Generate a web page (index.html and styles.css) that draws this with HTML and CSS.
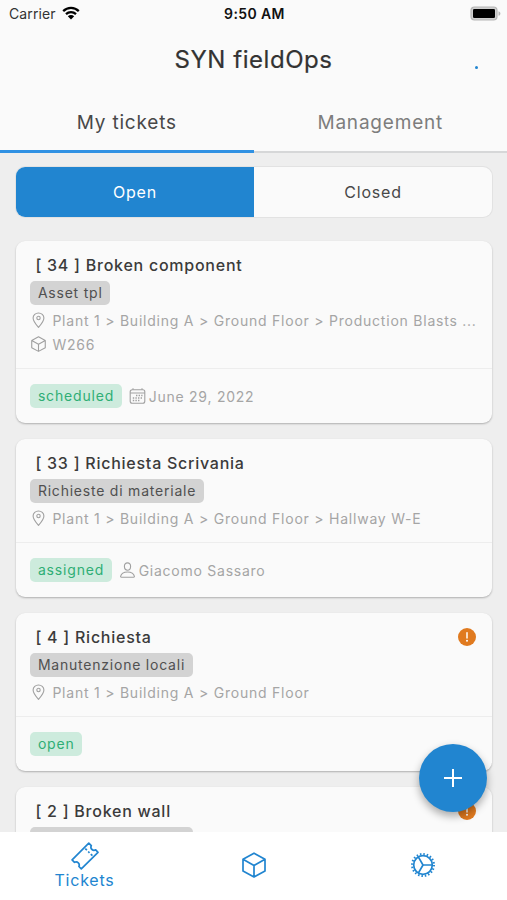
FILE: index.html
```html
<!DOCTYPE html>
<html lang="en">
<head>
    <meta charset="UTF-8">
    <meta name="viewport" content="width=device-width, initial-scale=1.0">
    <title>SYN fieldOps</title>
    <link rel="stylesheet" href="styles.css">
</head>
<body>
    <!-- shared icons -->
    <svg class="icon-defs">
        <symbol id="pin" viewBox="0 0 16 16">
            <path d="M8 1C5.1 1 2.6 3.1 2.6 5.9 2.6 9.3 6.3 13.3 8 15.3 9.7 13.3 13.4 9.3 13.4 5.9 13.4 3.1 10.9 1 8 1Z"/>
            <circle cx="8" cy="6" r="1.7"/>
        </symbol>
        <symbol id="cube" viewBox="0 0 26 26">
            <path d="M13 1.2 24 7.2V19L13 25 2 19V7.2ZM2 7.2 13 13.4 24 7.2M13 13.4V25" stroke-linejoin="round"/>
        </symbol>
        <symbol id="alert" viewBox="0 0 18 18">
            <circle cx="9" cy="9" r="9" fill="#e07a1f"/>
            <path d="M9 4.7V10" stroke="#fff" stroke-width="1.5" stroke-linecap="round"/>
            <circle cx="9" cy="12.7" r="1" fill="#fff"/>
        </symbol>
    </svg>

    <div class="app">
        <header class="header">
            <div class="status-bar">
                <span class="carrier">Carrier
                    <svg class="wifi" viewBox="0 0 18 14">
                        <path d="M1.2 5.1C5.6.8 12.4.8 16.8 5.1M4 8.1C6.8 5.5 11.2 5.5 14 8.1" fill="none" stroke="#000" stroke-width="2.3"/>
                        <path d="M9 13.4 5.8 10.2C7.6 8.7 10.4 8.7 12.2 10.2Z"/>
                    </svg>
                </span>
                <span class="clock">9:50 AM</span>
                <svg class="battery" viewBox="0 0 31 15">
                    <rect x="1" y="1" width="26" height="13" rx="3.5" fill="#d0d0d0" stroke="#b5b5b5" stroke-width="1.2"/>
                    <rect x="3" y="3" width="22" height="9" rx="1.3"/>
                    <path d="M28.5 5.2C31 6 31 9 28.5 9.8Z" fill="#b5b5b5"/>
                </svg>
            </div>
            <div class="title-bar">
                <h1>SYN fieldOps</h1>
                <span class="dot"></span>
            </div>
            <nav class="tabs">
                <a class="tab active">My tickets</a>
                <a class="tab">Management</a>
            </nav>
        </header>

        <main class="content">
            <div class="segment">
                <button class="selected">Open</button>
                <button>Closed</button>
            </div>

            <article class="card">
                <div class="card-body">
                    <h2>[ 34 ] Broken component</h2>
                    <span class="tag">Asset tpl</span>
                    <p class="info"><svg class="icon"><use href="#pin"/></svg><span>Plant 1 &gt; Building A &gt; Ground Floor &gt; Production Blasts ...</span></p>
                    <p class="info"><svg class="icon"><use href="#cube"/></svg><span>W266</span></p>
                </div>
                <div class="card-footer">
                    <span class="status">scheduled</span>
                    <svg class="icon" viewBox="0 0 16 16">
                        <rect x=".7" y="1.7" width="14.6" height="13.5" rx="2"/>
                        <path d="M.7 5H15.3M3.5.3V1.7M12.5.3V1.7"/>
                        <path d="M6.5 7.5H13M3.3 10H13M3.3 12.5H10.5" stroke-width="1.3" stroke-dasharray="1.4 1.2"/>
                    </svg>
                    <span class="meta">June 29, 2022</span>
                </div>
            </article>

            <article class="card">
                <div class="card-body">
                    <h2>[ 33 ] Richiesta Scrivania</h2>
                    <span class="tag">Richieste di materiale</span>
                    <p class="info"><svg class="icon"><use href="#pin"/></svg><span>Plant 1 &gt; Building A &gt; Ground Floor &gt; Hallway W-E</span></p>
                </div>
                <div class="card-footer">
                    <span class="status">assigned</span>
                    <svg class="icon" viewBox="0 0 16 16">
                        <path d="M8 .9C6 .9 4.8 2.4 4.9 4.4 5 6.6 6.3 8.2 8 8.2S11 6.6 11.1 4.4C11.2 2.4 10 .9 8 .9ZM8 10C4.5 10 1.7 11.7 1.1 14.4 1 14.9 1.3 15.2 1.8 15.2H14.2C14.7 15.2 15 14.9 14.9 14.4 14.3 11.7 11.5 10 8 10Z"/>
                    </svg>
                    <span class="meta">Giacomo Sassaro</span>
                </div>
            </article>

            <article class="card">
                <div class="card-body">
                    <div class="card-head">
                        <h2>[ 4 ] Richiesta</h2>
                        <svg class="alert"><use href="#alert"/></svg>
                    </div>
                    <span class="tag">Manutenzione locali</span>
                    <p class="info"><svg class="icon"><use href="#pin"/></svg><span>Plant 1 &gt; Building A &gt; Ground Floor</span></p>
                </div>
                <div class="card-footer">
                    <span class="status">open</span>
                </div>
            </article>

            <article class="card">
                <div class="card-body">
                    <div class="card-head">
                        <h2>[ 2 ] Broken wall</h2>
                        <svg class="alert"><use href="#alert"/></svg>
                    </div>
                    <span class="tag"></span>
                </div>
            </article>
        </main>

        <button class="fab" aria-label="Add ticket">
            <svg viewBox="0 0 20 20"><path d="M10 1V19M1 10H19"/></svg>
        </button>

        <nav class="bottom-nav">
            <a class="nav-item">
                <svg class="ticket" viewBox="0 0 28 28">
                    <path d="M17.8 1.2 20.3 3.7C19.6 5.2 20 6.7 21 7.5 22 8.4 23.3 8.5 24.7 7.9L27 10.3 10.3 26.8 7.9 24.5C8.6 23 8.2 21.7 7.3 20.8 6.3 19.9 5 19.7 3.5 20.3L1.1 17.9Z" stroke-linejoin="round"/>
                    <path d="M14.3 6.6 15.9 8.2M17.2 9.5 18.5 10.8M19.8 12.1 21.4 13.7"/>
                </svg>
                <span>Tickets</span>
            </a>
            <a class="nav-item"><svg><use href="#cube"/></svg></a>
            <a class="nav-item">
                <svg viewBox="0 0 26 26">
                    <circle cx="13" cy="13" r="9.3"/>
                    <circle cx="13" cy="13" r="10.9" stroke-width="2.2" stroke-dasharray="1.5 1.924"/>
                    <path d="M13 13H22.3M13 13 8.3 4.9M13 13 8.3 21.1"/>
                </svg>
            </a>
        </nav>
    </div>
</body>
</html>
```
FILE: styles.css
```css
* { box-sizing: border-box; }
body { margin: 0; font-family: Inter, "Liberation Sans", sans-serif; background: #eee; color: #3b3b3b; }
h1, h2, p { margin: 0; font-weight: 500; }
button { font: inherit; border: 0; padding: 0; }
svg { display: block; flex: none; }
.icon-defs { display: none; }

.app { position: relative; display: flex; flex-direction: column; height: 900px; overflow: hidden; }

.header { flex: none; height: 153px; background: #fafafa; border-bottom: 2px solid #d6d7d8; }
.status-bar { display: grid; grid-template-columns: 1fr auto 1fr; align-items: center; height: 28px; padding: 0 7px 0 9px; color: #111; }
.carrier { display: flex; align-items: center; gap: 6px; margin-top: -1px; font-size: 14px; letter-spacing: .1px; color: #333; }
.wifi { width: 18px; height: 14px; margin-top: -1px; }
.clock { margin-top: -1px; font-size: 14px; font-weight: 600; letter-spacing: .4px; }
.battery { width: 31px; height: 15px; justify-self: end; margin: -2px -1px 0 0; }

.title-bar { display: flex; align-items: center; justify-content: center; height: 63px; }
.title-bar h1 { font-size: 24px; font-weight: 400; letter-spacing: .55px; color: #333; -webkit-text-stroke: .2px #333; }
.dot { position: absolute; top: 66px; left: 475px; width: 3px; height: 3px; border-radius: 50%; background: #2185d0; }

.tabs { display: flex; height: 62px; }
.tab { flex: 1; display: flex; align-items: center; justify-content: center; font-size: 19px; letter-spacing: .8px; color: #7d7d7d; padding-top: 1px; }
.tab.active { color: #484848; border-bottom: 3px solid #2f91e3; padding-top: 4px; }

.content { flex: 1; min-height: 0; overflow: hidden; padding: 14px 15px 0 16px; }
.segment { display: flex; height: 50px; margin-bottom: 24px; border-radius: 9px; overflow: hidden; background: #fafafa; box-shadow: 0 0 0 1px #e2e2e2; }
.segment button { flex: 1; background: none; font-size: 16px; letter-spacing: .8px; color: #484848; }
.segment .selected { background: #2185d0; color: #fff; }

.card { margin-bottom: 16px; border-radius: 9px; background: #fafafa; box-shadow: 0 1px 2px #0004; }
.card-body { padding: 14px 15px 12px 14.4px; border-bottom: 1px solid #ededed; }
.card-head { display: flex; justify-content: space-between; }
.card h2 { padding-left: 5px; font-size: 16px; line-height: 20px; letter-spacing: .75px; }
.alert { width: 18px; height: 18px; margin: 1px 1px 0 0; }
.tag, .status { display: block; width: fit-content; height: 24px; padding: 0 7.5px; border-radius: 5px; font-size: 14px; line-height: 24px; letter-spacing: .78px; }
.tag { margin: 6px 0 3px; background: #d3d3d3; color: #505050; }
.tag:empty { width: 163px; }
.info { display: flex; align-items: center; gap: 5px; height: 24px; font-size: 14px; font-weight: 400; letter-spacing: .77px; white-space: nowrap; color: #a5a5a5; }
.icon { width: 17px; height: 16px; fill: none; stroke: #a0a0a0; stroke-width: 1.1; }
.icon use[href="#cube"] { stroke-width: 1.8; }
.card-footer { display: flex; align-items: center; height: 54px; padding: 0 14.4px; }
.card-footer .icon { margin: 0 3px 0 7px; }
.status { background: #cdebdd; color: #2fae75; letter-spacing: .83px; }
.meta { font-size: 14px; letter-spacing: .75px; color: #a5a5a5; }

.fab { position: absolute; left: 419px; top: 744px; width: 68px; height: 68px; border-radius: 50%; display: flex; align-items: center; justify-content: center; background: #2185d0; box-shadow: 0 4px 8px #0005; }
.fab svg { width: 20px; height: 20px; fill: none; stroke: #fff; stroke-width: 2; }

.bottom-nav { flex: none; display: flex; height: 68px; background: #fff; }
.nav-item { flex: 1; display: flex; flex-direction: column; align-items: center; justify-content: center; font-size: 16px; letter-spacing: .8px; color: #2185d0; padding-bottom: 2px; }
.nav-item svg { width: 26px; height: 26px; fill: none; stroke: #2185d0; stroke-width: 1.7; }
.nav-item .ticket { width: 28px; height: 28px; margin-top: 2px; }
```
